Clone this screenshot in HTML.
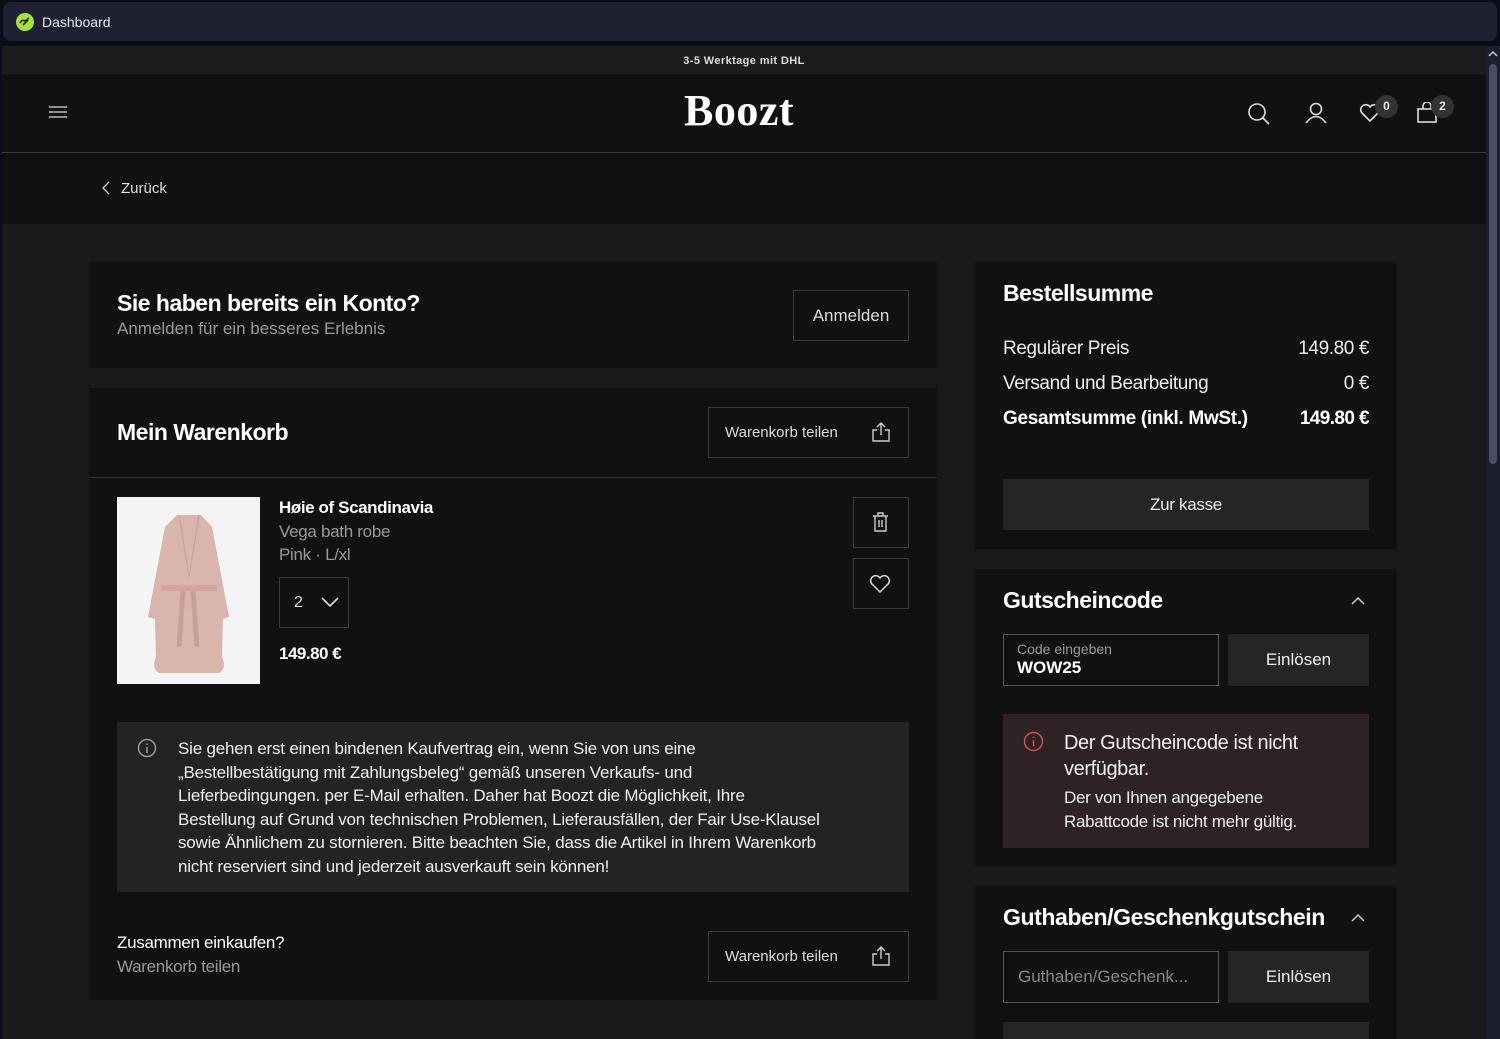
<!DOCTYPE html>
<html><head><meta charset="utf-8"><style>
*{margin:0;padding:0;box-sizing:border-box}
body{width:1500px;height:1039px;overflow:hidden;background:#0b0d18;font-family:"Liberation Sans",sans-serif;color:#eee;position:relative}
.a{position:absolute}
.card{position:absolute;background:#111}
.btn{position:absolute;border:1px solid #3a3a3a;color:#ddd;display:flex;align-items:center;justify-content:center}
.g{color:#999}
.r{text-align:right;width:200px}
</style></head><body>
<div class="a" style="left:3px;top:2px;width:1494px;height:39px;background:#1f2133;border-radius:8px"></div>
<div class="a" style="left:16px;top:13px;width:18px;height:18px;border-radius:50%;background:#a8e23a"></div>
<svg class="a" style="left:19px;top:17px" width="12" height="10"><path d="M1 6 Q3 2 6 4 L10 1 M4 8 L9 3" stroke="#1a2a10" stroke-width="1.6" fill="none"/></svg>
<div class="a" style="left:42px;top:14px;font-size:14px;color:#e8e8f0">Dashboard</div>

<div class="a" style="left:2px;top:46px;width:1484px;height:993px;background:#1a1a1a"></div>
<div class="a" style="left:2px;top:46px;width:1484px;height:28px;background:#1c1c1c;font-size:11px;font-weight:bold;color:#ddd;text-align:center;line-height:30px;letter-spacing:0.4px">3-5 Werktage mit DHL</div>
<div class="a" style="left:2px;top:74px;width:1484px;height:150px;background:#111"></div>
<div class="a" style="left:2px;top:152px;width:1484px;height:1px;background:#3a3a3a"></div>
<div class="a" style="left:1486px;top:46px;width:14px;height:993px;background:#1c1e2c"></div>
<div class="a" style="left:1489px;top:64px;width:8px;height:400px;background:#4a4d66;border-radius:4px"></div>
<svg class="a" style="left:1488px;top:50px" width="10" height="8"><path d="M1 6 L5 2 L9 6" stroke="#ccc" stroke-width="1.5" fill="none"/></svg>

<svg class="a" style="left:49px;top:105px" width="18" height="14"><path d="M0 2H18M0 7H18M0 12H18" stroke="#bbb" stroke-width="1.6"/></svg>
<div class="a" style="left:684px;top:85px;font-family:'Liberation Serif',serif;font-weight:bold;font-size:44px;color:#fff;letter-spacing:0.5px">Boozt</div>
<svg class="a" style="left:1247px;top:102px" width="24" height="24" fill="none" stroke="#ddd" stroke-width="1.6"><circle cx="10" cy="10" r="8"/><path d="M16 16L22 22"/></svg>
<svg class="a" style="left:1304px;top:102px" width="24" height="22" fill="none" stroke="#ddd" stroke-width="1.6"><circle cx="12" cy="7" r="5.5"/><path d="M2 21Q12 8 22 21"/></svg>
<svg class="a" style="left:1359px;top:103px" width="22" height="20" fill="none" stroke="#ddd" stroke-width="1.6"><path d="M11 18L2.5 9.5A4.5 4.5 0 0 1 11 4A4.5 4.5 0 0 1 19.5 9.5Z"/></svg>
<svg class="a" style="left:1416px;top:102px" width="22" height="22" fill="none" stroke="#ddd" stroke-width="1.6"><rect x="2" y="7" width="18" height="13"/><path d="M7 7V4A4 4 0 0 1 15 4V7"/></svg>
<div class="a" style="left:1375px;top:95px;width:23px;height:23px;border-radius:50%;background:#333;font-size:12px;font-weight:bold;text-align:center;line-height:23px">0</div>
<div class="a" style="left:1431px;top:95px;width:23px;height:23px;border-radius:50%;background:#333;font-size:12px;font-weight:bold;text-align:center;line-height:23px">2</div>
<svg class="a" style="left:102px;top:181px" width="8" height="14"><path d="M7 1L1 7L7 13" stroke="#ccc" stroke-width="1.4" fill="none"/></svg>
<div class="a" style="left:121px;top:180px;font-size:15px;color:#ddd">Zurück</div>

<!-- login card -->
<div class="card" style="left:89px;top:262px;width:848px;height:106px"></div>
<div class="a" style="left:117px;top:290px;font-size:23px;font-weight:bold;color:#fff;letter-spacing:-0.5px">Sie haben bereits ein Konto?</div>
<div class="a g" style="left:117px;top:319px;font-size:17px">Anmelden für ein besseres Erlebnis</div>
<div class="btn" style="left:793px;top:290px;width:116px;height:51px;font-size:17px">Anmelden</div>

<!-- cart card -->
<div class="card" style="left:89px;top:388px;width:848px;height:612px"></div>
<div class="a" style="left:89px;top:477px;width:848px;height:1px;background:#333"></div>
<div class="a" style="left:117px;top:419px;font-size:23px;font-weight:bold;color:#fff;letter-spacing:-0.5px">Mein Warenkorb</div>
<div class="btn" style="left:708px;top:407px;width:201px;height:51px;font-size:15px;justify-content:flex-start;padding-left:16px">Warenkorb teilen</div>
<svg class="a" style="left:871px;top:421px" width="20" height="22" fill="none" stroke="#ccc" stroke-width="1.4"><path d="M10 14V2M6 6L10 2L14 6M6 9H2V20H18V9H14"/></svg>
<div class="a" style="left:117px;top:497px;width:143px;height:187px;background:#f4f4f4"></div>
<svg class="a" style="left:117px;top:497px" width="143" height="187"><path d="M60 18L84 18L95 30L112 120L106 122L105 160Q110 172 102 176L42 176Q34 172 39 160L38 122L31 120L48 30Z" fill="#d9b5ad"/><path d="M62 18L72 80L82 18" stroke="#c9a097" fill="none"/><rect x="44" y="88" width="56" height="6" fill="#cfa79e"/><path d="M66 94L62 150M76 94L80 150" stroke="#c9a097" stroke-width="5"/></svg>
<div class="a" style="left:279px;top:498px;font-size:17px;font-weight:bold;color:#fff;letter-spacing:-0.4px">Høie of Scandinavia</div>
<div class="a g" style="left:279px;top:522px;font-size:17px;letter-spacing:-0.3px">Vega bath robe</div>
<div class="a g" style="left:279px;top:545px;font-size:17px;letter-spacing:-0.3px">Pink · L/xl</div>
<div class="btn" style="left:279px;top:577px;width:70px;height:51px;justify-content:flex-start;padding-left:14px;font-size:16px">2</div>
<svg class="a" style="left:321px;top:597px" width="18" height="11"><path d="M1 1L9 9L17 1" stroke="#ddd" stroke-width="1.6" fill="none"/></svg>
<div class="a" style="left:279px;top:644px;font-size:17px;font-weight:bold;color:#fff;letter-spacing:-0.5px">149.80 €</div>
<div class="btn" style="left:853px;top:497px;width:56px;height:51px"></div>
<svg class="a" style="left:872px;top:512px" width="17" height="20" fill="none" stroke="#ccc" stroke-width="1.4"><path d="M1 4H16M6 4V1H11V4M3 4V19H14V4M7 8V15M10 8V15"/></svg>
<div class="btn" style="left:853px;top:558px;width:56px;height:51px"></div>
<svg class="a" style="left:869px;top:574px" width="22" height="20" fill="none" stroke="#ddd" stroke-width="1.5"><path d="M11 18L2.5 9.5A4.5 4.5 0 0 1 11 4A4.5 4.5 0 0 1 19.5 9.5Z"/></svg>

<div class="a" style="left:117px;top:722px;width:792px;height:170px;background:#232323"></div>
<svg class="a" style="left:137px;top:738px" width="20" height="20" fill="none" stroke="#aaa" stroke-width="1.3"><circle cx="10" cy="10" r="8.5"/><path d="M10 9V15M10 5.5V7"/></svg>
<div class="a" style="left:178px;top:737px;white-space:nowrap;font-size:17px;line-height:23.5px;color:#f0f0f0;letter-spacing:-0.2px">Sie gehen erst einen bindenen Kaufvertrag ein, wenn Sie von uns eine<br>„Bestellbestätigung mit Zahlungsbeleg“ gemäß unseren Verkaufs- und<br>Lieferbedingungen. per E-Mail erhalten. Daher hat Boozt die Möglichkeit, Ihre<br>Bestellung auf Grund von technischen Problemen, Lieferausfällen, der Fair Use-Klausel<br>sowie Ähnlichem zu stornieren. Bitte beachten Sie, dass die Artikel in Ihrem Warenkorb<br>nicht reserviert sind und jederzeit ausverkauft sein können!</div>
<div class="a" style="left:117px;top:933px;font-size:17px;color:#fff;letter-spacing:-0.3px">Zusammen einkaufen?</div>
<div class="a g" style="left:117px;top:957px;font-size:17px;letter-spacing:-0.3px">Warenkorb teilen</div>
<div class="btn" style="left:708px;top:931px;width:201px;height:51px;font-size:15px;justify-content:flex-start;padding-left:16px">Warenkorb teilen</div>
<svg class="a" style="left:871px;top:945px" width="20" height="22" fill="none" stroke="#ccc" stroke-width="1.4"><path d="M10 14V2M6 6L10 2L14 6M6 9H2V20H18V9H14"/></svg>

<!-- summary -->
<div class="card" style="left:975px;top:262px;width:422px;height:287px"></div>
<div class="a" style="left:1003px;top:280px;font-size:23px;font-weight:bold;color:#fff;letter-spacing:-0.5px">Bestellsumme</div>
<div class="a" style="left:1003px;top:338px;font-size:19px;letter-spacing:-0.4px">Regulärer Preis</div>
<div class="a r" style="left:1169px;top:338px;font-size:19px;letter-spacing:-0.4px">149.80 €</div>
<div class="a" style="left:1003px;top:373px;font-size:19px;letter-spacing:-0.4px">Versand und Bearbeitung</div>
<div class="a r" style="left:1169px;top:373px;font-size:19px;letter-spacing:-0.4px">0 €</div>
<div class="a" style="left:1003px;top:408px;font-size:19px;font-weight:bold;color:#fff;letter-spacing:-0.3px">Gesamtsumme (inkl. MwSt.)</div>
<div class="a r" style="left:1169px;top:408px;font-size:19px;font-weight:bold;color:#fff;letter-spacing:-0.6px">149.80 €</div>
<div class="a" style="left:1003px;top:479px;width:366px;height:51px;background:#252525;font-size:17px;text-align:center;line-height:51px;letter-spacing:-0.3px">Zur kasse</div>

<div class="card" style="left:975px;top:569px;width:422px;height:297px"></div>
<div class="a" style="left:1003px;top:587px;font-size:23px;font-weight:bold;color:#fff;letter-spacing:-0.5px">Gutscheincode</div>
<svg class="a" style="left:1351px;top:596px" width="14" height="9"><path d="M1 8L7 2L13 8" stroke="#ccc" stroke-width="1.5" fill="none"/></svg>
<div class="a" style="left:1003px;top:634px;width:216px;height:52px;border:1px solid #555"></div>
<div class="a g" style="left:1017px;top:641px;font-size:14px">Code eingeben</div>
<div class="a" style="left:1017px;top:658px;font-size:17px;font-weight:bold;color:#fff">WOW25</div>
<div class="a" style="left:1228px;top:634px;width:141px;height:52px;background:#252525;font-size:17px;text-align:center;line-height:52px">Einlösen</div>
<div class="a" style="left:1003px;top:714px;width:366px;height:134px;background:#2e2226"></div>
<svg class="a" style="left:1023px;top:731px" width="21" height="21" fill="none" stroke="#d9534f" stroke-width="1.4"><circle cx="10.5" cy="10.5" r="9"/><path d="M10.5 9V15M10.5 5.5V7"/></svg>
<div class="a" style="left:1064px;top:730px;white-space:nowrap;font-size:20px;line-height:26px;color:#f0f0f0;letter-spacing:-0.4px">Der Gutscheincode ist nicht<br>verfügbar.</div>
<div class="a" style="left:1064px;top:786px;white-space:nowrap;font-size:17px;line-height:23.5px;color:#f0f0f0;letter-spacing:-0.3px">Der von Ihnen angegebene<br>Rabattcode ist nicht mehr gültig.</div>

<div class="card" style="left:975px;top:886px;width:422px;height:153px"></div>
<div class="a" style="left:1003px;top:904px;font-size:23px;font-weight:bold;color:#fff;letter-spacing:-0.4px">Guthaben/Geschenkgutschein</div>
<svg class="a" style="left:1351px;top:913px" width="14" height="9"><path d="M1 8L7 2L13 8" stroke="#ccc" stroke-width="1.5" fill="none"/></svg>
<div class="a g" style="left:1003px;top:951px;width:216px;height:52px;border:1px solid #555;font-size:17px;line-height:50px;padding-left:14px;color:#888">Guthaben/Geschenk...</div>
<div class="a" style="left:1228px;top:951px;width:141px;height:52px;background:#252525;font-size:17px;text-align:center;line-height:52px">Einlösen</div>
<div class="a" style="left:1003px;top:1022px;width:366px;height:17px;background:#252525"></div>
</body></html>
